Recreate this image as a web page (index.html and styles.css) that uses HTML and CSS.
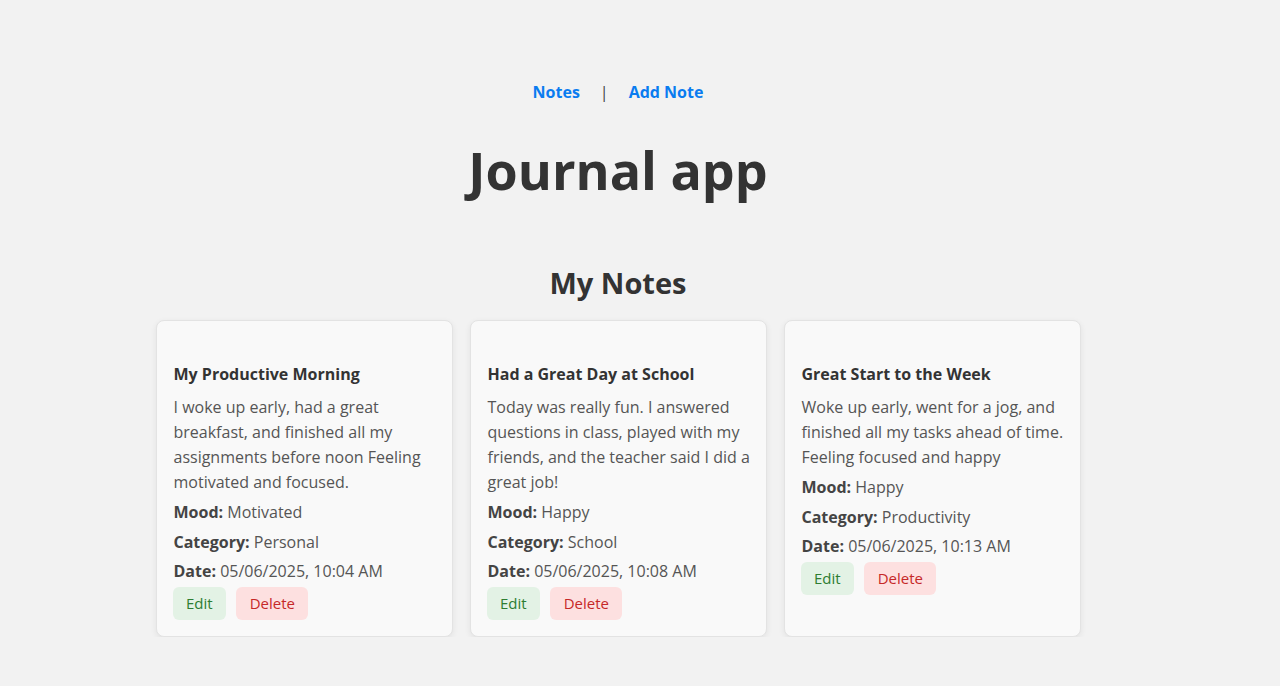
FILE: index.html
```html
<!DOCTYPE html>
<html lang="en">
<head>
<meta charset="utf-8">
<title>Journal app</title>
<link rel="stylesheet" href="styles.css">
</head>
<body>
<div class="page">
  <nav class="nav">
    <a href="#" class="nav-link">Notes</a>
    <span class="sep">|</span>
    <a href="#" class="nav-link">Add Note</a>
  </nav>
  <h1 class="title">Journal app</h1>
  <h2 class="subtitle">My Notes</h2>
  <div class="cards">
    <div class="card">
      <h3 class="card-title">My Productive Morning</h3>
      <p class="desc">I woke up early, had a great breakfast, and finished all my assignments before noon Feeling motivated and focused.</p>
      <p class="meta"><b>Mood:</b> Motivated</p>
      <p class="meta"><b>Category:</b> Personal</p>
      <p class="meta"><b>Date:</b> 05/06/2025, 10:04 AM</p>
      <div class="actions"><button class="btn edit">Edit</button><button class="btn del">Delete</button></div>
    </div>
    <div class="card">
      <h3 class="card-title">Had a Great Day at School</h3>
      <p class="desc">Today was really fun. I answered questions in class, played with my friends, and the teacher said I did a great job!</p>
      <p class="meta"><b>Mood:</b> Happy</p>
      <p class="meta"><b>Category:</b> School</p>
      <p class="meta"><b>Date:</b> 05/06/2025, 10:08 AM</p>
      <div class="actions"><button class="btn edit">Edit</button><button class="btn del">Delete</button></div>
    </div>
    <div class="card">
      <h3 class="card-title">Great Start to the Week</h3>
      <p class="desc">Woke up early, went for a jog, and finished all my tasks ahead of time. Feeling focused and happy</p>
      <p class="meta"><b>Mood:</b> Happy</p>
      <p class="meta"><b>Category:</b> Productivity</p>
      <p class="meta"><b>Date:</b> 05/06/2025, 10:13 AM</p>
      <div class="actions"><button class="btn edit">Edit</button><button class="btn del">Delete</button></div>
    </div>
  </div>
</div>
</body>
</html>
```
FILE: styles.css
```css
* { box-sizing: border-box; }
body {
  margin: 0;
  background: #f2f2f2;
  font-family: "Open Sans", "Noto Sans", sans-serif;
  color: #333;
}
.page {
  width: 1236px;
  text-align: center;
  padding-top: 80px;
}
.nav {
  display: flex;
  justify-content: center;
  align-items: center;
  font-size: 16px;
  font-weight: 700;
  line-height: 24px;
}
.nav-link {
  color: #0a7cf0;
  text-decoration: none;
}
.sep {
  color: #444;
  font-weight: 400;
  margin: 0 20px;
}
.title {
  font-size: 52px;
  font-weight: 700;
  margin: 30px 0 0;
  line-height: 71px;
}
.subtitle {
  font-size: 29px;
  font-weight: 700;
  margin: 58px 0 0;
  line-height: 40px;
}
.cards {
  display: grid;
  grid-template-columns: repeat(3, 297px);
  gap: 17px;
  justify-content: center;
  margin-top: 17px;
  text-align: left;
}
.card {
  background: #f9f9f9;
  border: 1px solid #e3e3e3;
  border-radius: 8px;
  box-shadow: 0 2px 6px rgba(0,0,0,0.07);
  padding: 32px 9px 16px 17px;
}
.card-title {
  font-size: 16px;
  font-weight: 700;
  margin: 10px 0 10px;
  line-height: 22px;
  color: #333;
}
.desc {
  font-size: 16px;
  line-height: 25px;
  color: #555;
  margin: 0 0 6px;
}
.meta {
  font-size: 16px;
  line-height: 22px;
  color: #555;
  margin: 0 0 7.5px;
}
.meta b { color: #444; }
.actions {
  display: flex;
  gap: 10px;
  margin-top: -3px;
  margin-left: -1px;
}
.btn {
  font-family: inherit;
  font-size: 15px;
  font-weight: 500;
  border: none;
  border-radius: 6px;
  height: 33px;
  padding: 0 13.5px;
}
.edit { background: #e3f2e5; color: #2e7d32; }
.del { background: #fde0e0; color: #c62828; }
```
